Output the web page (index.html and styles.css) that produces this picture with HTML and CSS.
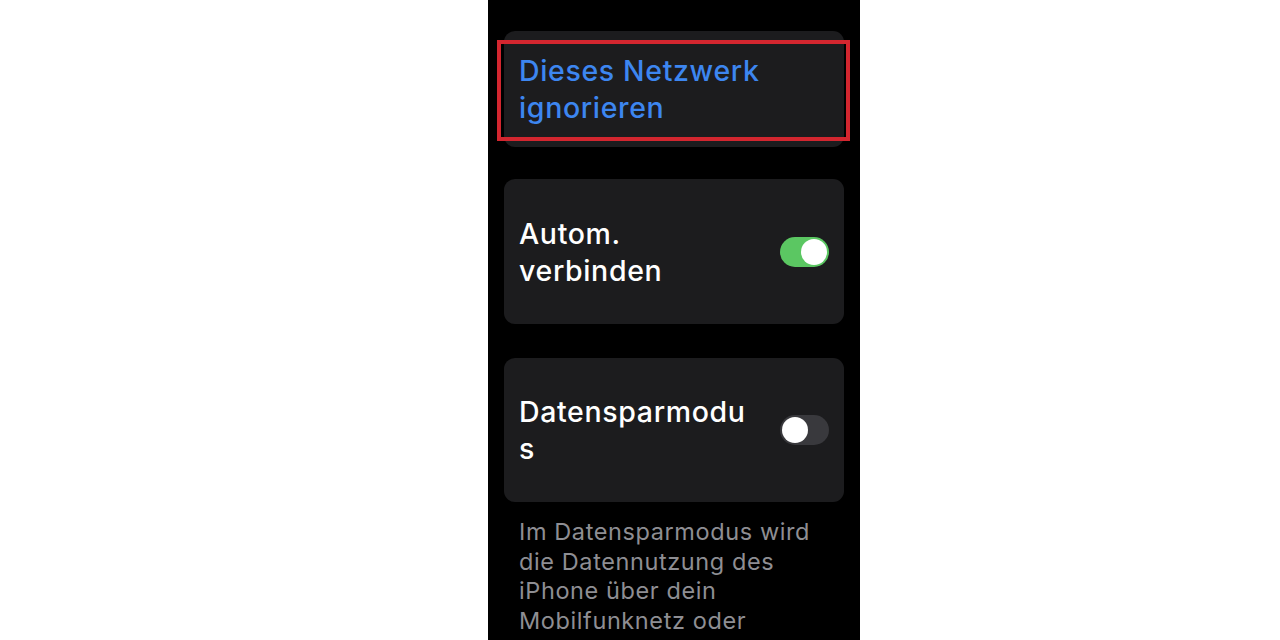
FILE: index.html
```html
<!DOCTYPE html>
<html lang="de">
<head>
<meta charset="utf-8">
<title>WLAN-Einstellungen</title>
<link rel="stylesheet" href="styles.css">
</head>
<body>
<div class="screen">
  <div class="card card-action">
    <span class="action-label">Dieses Netzwerk<br>ignorieren</span>
  </div>
  <div class="highlight"></div>

  <div class="card card-toggle">
    <span class="row-label">Autom.<br>verbinden</span>
    <span class="switch switch-on"><span class="knob"></span></span>
  </div>

  <div class="card card-toggle card-last">
    <span class="row-label">Datensparmodu<br>s</span>
    <span class="switch switch-off"><span class="knob"></span></span>
  </div>

  <p class="footnote">Im Datensparmodus wird die Datennutzung des iPhone über dein Mobilfunknetz oder bestimmte WLAN-Netzwerke, die du auswählst, reduziert.</p>
</div>
</body>
</html>
```

FILE: styles.css
```css
html, body {
  margin: 0;
  padding: 0;
  background: #ffffff;
}

body {
  font-family: "Inter", "Liberation Sans", sans-serif;
  -webkit-font-smoothing: antialiased;
}

.screen {
  position: relative;
  width: 372px;
  height: 640px;
  margin-left: 488px;
  background: #000000;
  overflow: hidden;
  box-sizing: border-box;
  padding: 31px 16px 0 16px;
}

.card {
  background: #1c1c1e;
  border-radius: 11px;
  display: flex;
  align-items: center;
  box-sizing: border-box;
  padding: 0 15px;
}

.card-action {
  height: 116px;
}

.card-toggle {
  height: 145px;
  margin-top: 32px;
  justify-content: space-between;
}

.card-last {
  margin-top: 34px;
  height: 144px;
}

.action-label {
  color: #3d86f0;
  font-size: 28.5px;
  font-weight: 500;
  line-height: 37px;
  letter-spacing: 0.65px;
}

.row-label {
  color: #ffffff;
  font-size: 28.5px;
  font-weight: 500;
  line-height: 37px;
  letter-spacing: 0.65px;
}

.highlight {
  position: absolute;
  left: 9px;
  top: 40px;
  width: 353px;
  height: 101px;
  box-sizing: border-box;
  border: 4px solid #d3262f;
}

.switch {
  position: relative;
  flex: 0 0 auto;
  width: 49px;
  height: 30px;
  border-radius: 15px;
  display: flex;
  align-items: center;
  padding: 0 2px;
  box-sizing: border-box;
}

.switch-on {
  background: #5bc762;
  justify-content: flex-end;
}

.switch-off {
  background: #39393d;
  justify-content: flex-start;
}

.knob {
  width: 26px;
  height: 26px;
  border-radius: 50%;
  background: #ffffff;
}

.footnote {
  margin: 15px 0 0 0;
  padding: 0 15px;
  color: #8e8e93;
  font-size: 23.5px;
  font-weight: 400;
  line-height: 29.5px;
  letter-spacing: 0.6px;
}
```
